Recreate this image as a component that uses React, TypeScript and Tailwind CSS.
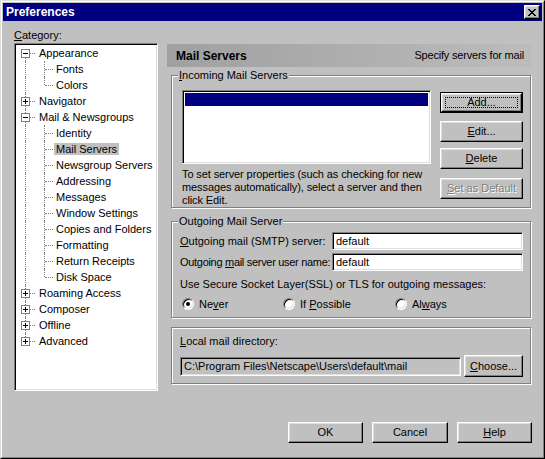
import React from 'react'

const raised =
  'bg-[#c0c0c0] border border-t-white border-l-white border-r-black border-b-black shadow-[inset_-1px_-1px_0_#808080,inset_1px_1px_0_#dfdfdf]'
const sunken =
  'border border-t-[#808080] border-l-[#808080] border-r-white border-b-white shadow-[inset_1px_1px_0_#000,inset_-1px_-1px_0_#dfdfdf]'
const etched = 'border border-[#808080] shadow-[inset_1px_1px_0_#fff,1px_1px_0_#fff]'

type Item = { label: string; level: 0 | 1; exp?: '+' | '-'; lastChild?: boolean; selected?: boolean }

const tree: Item[] = [
  { label: 'Appearance', level: 0, exp: '-' },
  { label: 'Fonts', level: 1 },
  { label: 'Colors', level: 1, lastChild: true },
  { label: 'Navigator', level: 0, exp: '+' },
  { label: 'Mail & Newsgroups', level: 0, exp: '-' },
  { label: 'Identity', level: 1 },
  { label: 'Mail Servers', level: 1, selected: true },
  { label: 'Newsgroup Servers', level: 1 },
  { label: 'Addressing', level: 1 },
  { label: 'Messages', level: 1 },
  { label: 'Window Settings', level: 1 },
  { label: 'Copies and Folders', level: 1 },
  { label: 'Formatting', level: 1 },
  { label: 'Return Receipts', level: 1 },
  { label: 'Disk Space', level: 1, lastChild: true },
  { label: 'Roaming Access', level: 0, exp: '+' },
  { label: 'Composer', level: 0, exp: '+' },
  { label: 'Offline', level: 0, exp: '+' },
  { label: 'Advanced', level: 0, exp: '+' },
]

function TreeRow({ item, first, last }: { item: Item; first: boolean; last: boolean }) {
  const rootLine = first ? 'top-[8px] bottom-0' : last ? 'top-0 h-[8px]' : 'inset-y-0'
  return (
    <div className={`relative h-[16px] leading-[16px] ${item.level === 0 ? 'pl-[21px]' : 'pl-[38px]'}`}>
      <span className={`absolute left-[9px] w-0 border-l border-dotted border-[#808080] ${rootLine}`} />
      {item.level === 0 ? (
        <>
          <span className="absolute left-[14px] top-[8px] w-[5px] border-t border-dotted border-[#808080]" />
          <span className="absolute left-[5px] top-[4px] w-[9px] h-[9px] border border-[#808080] bg-white">
            <span className="absolute left-[1px] top-[3px] w-[5px] h-px bg-black" />
            {item.exp === '+' && <span className="absolute left-[3px] top-[1px] w-px h-[5px] bg-black" />}
          </span>
        </>
      ) : (
        <>
          <span
            className={`absolute left-[28px] w-0 border-l border-dotted border-[#808080] ${
              item.lastChild ? 'top-0 h-[8px]' : 'inset-y-0'
            }`}
          />
          <span className="absolute left-[29px] top-[8px] w-[8px] border-t border-dotted border-[#808080]" />
        </>
      )}
      <span className={`px-[2px] ${item.selected ? 'bg-[#c0c0c0]' : ''}`}>{item.label}</span>
    </div>
  )
}

function Btn({ children, className = '' }: { children: React.ReactNode; className?: string }) {
  return (
    <div className={`${raised} h-[21px] flex items-center justify-center ${className}`}>{children}</div>
  )
}

function Radio({ checked }: { checked?: boolean }) {
  return (
    <span className="relative w-[12px] h-[12px] rounded-full bg-white border border-t-[#808080] border-l-[#808080] border-r-white border-b-white shadow-[inset_1px_1px_0_#000,inset_-1px_-1px_0_#dfdfdf] flex items-center justify-center">
      {checked && <span className="w-[4px] h-[4px] rounded-full bg-black" />}
    </span>
  )
}

export default function App() {
  return (
    <div className="w-[545px] h-[459px] bg-[#c0c0c0] border border-t-[#dfdfdf] border-l-[#dfdfdf] border-r-black border-b-black font-['Liberation_Sans',Arial,sans-serif] text-[11px] text-black select-none">
      <div className="h-full border border-t-white border-l-white border-r-[#808080] border-b-[#808080] p-[1px]">
        {/* Title bar */}
        <div className="h-[18px] bg-[#000080] flex items-center justify-between pl-[3px] pr-[2px]">
          <span className="text-white font-bold text-[12px]">Preferences</span>
          <div className={`${raised} w-[16px] h-[14px] flex items-center justify-center`}>
            <svg width="8" height="7" viewBox="0 0 8 7">
              <path
                fill="#000"
                d="M0 0h2v1H0zM6 0h2v1H6zM1 1h2v1H1zM5 1h2v1H5zM2 2h4v1H2zM3 3h2v1H3zM2 4h4v1H2zM1 5h2v1H1zM5 5h2v1H5zM0 6h2v1H0zM6 6h2v1H6z"
              />
            </svg>
          </div>
        </div>

        {/* Body */}
        <div className="flex pt-[6px] pl-[11px]">
          <div className="w-[144px]">
            <div className="h-[16px] leading-[16px]">
              <u>C</u>ategory:
            </div>
            <div className={`${sunken} bg-white h-[348px] pt-px pl-px`}>
              {tree.map((it, i) => (
                <TreeRow key={it.label} item={it} first={i === 0} last={i === tree.length - 1} />
              ))}
            </div>
          </div>

          <div className="ml-[9px] w-[364px] pt-[17px]">
            <div className="h-[23px] bg-gradient-to-r from-[#a0a0a0] to-[#bcbcbc] flex items-center justify-between pl-[9px] pr-[7px]">
              <span className="font-bold text-[12px]">Mail Servers</span>
              <span className="tracking-[-0.2px]">Specify servers for mail</span>
            </div>

            {/* Incoming */}
            <fieldset className={`${etched} mt-[2px] ml-[4px] w-[360px] pl-[10px] pr-[7px] pt-[8px] pb-0`}>
              <legend className="-ml-[4px] px-[1px] bg-[#c0c0c0] leading-[13px]">
                <u>I</u>ncoming Mail Servers
              </legend>
              <div className="flex">
                <div className="w-[249px]">
                  <div className={`${sunken} bg-white h-[74px] p-[2px]`}>
                    <div className="h-[13px] bg-[#000080]" />
                  </div>
                  <p className="mt-[4px] leading-[13px] tracking-[-0.1px] whitespace-nowrap">
                    To set server properties (such as checking for new
                    <br />
                    messages automatically), select a server and then
                    <br />
                    click Edit.
                  </p>
                </div>
                <div className="ml-[9px] w-[83px]">
                  <div className="mt-[2px] h-[21px] border border-black">
                    <div className={`${raised} h-full flex items-center justify-center p-[3px]`}>
                      <span className="w-full h-full border border-dotted border-black flex items-center justify-center">
                        Add...
                      </span>
                    </div>
                  </div>
                  <Btn className="mt-[8px]">
                    <span>
                      <u>E</u>dit...
                    </span>
                  </Btn>
                  <Btn className="mt-[6px]">
                    <span>
                      <u>D</u>elete
                    </span>
                  </Btn>
                  <Btn className="mt-[9px]">
                    <span className="text-[#808080] [text-shadow:1px_1px_0_#fff]">
                      <u>S</u>et as Default
                    </span>
                  </Btn>
                </div>
              </div>
            </fieldset>

            {/* Outgoing */}
            <fieldset className={`${etched} mt-[7px] ml-[4px] w-[360px] pl-[8px] pr-[7px] pt-[4px] pb-[6px]`}>
              <legend className="-ml-[2px] px-[1px] bg-[#c0c0c0] leading-[13px]">Outgoing Mail Server</legend>
              <div className="flex items-center h-[18px]">
                <span className="w-[152px] whitespace-nowrap">
                  <u>O</u>utgoing mail (SMTP) server:
                </span>
                <div className={`${sunken} bg-white w-[191px] h-full flex items-center pl-[3px]`}>default</div>
              </div>
              <div className="flex items-center h-[18px] mt-[3px]">
                <span className="w-[152px] whitespace-nowrap tracking-[-0.3px]">
                  Outgoing <u>m</u>ail server user name:
                </span>
                <div className={`${sunken} bg-white w-[191px] h-full flex items-center pl-[3px]`}>default</div>
              </div>
              <div className="mt-[7px] leading-[13px] whitespace-nowrap">
                Use Secure Socket Layer(SSL) or TLS for outgoing messages:
              </div>
              <div className="mt-[6px] ml-[2px] h-[14px] flex items-center">
                <div className="w-[101px] flex items-center gap-[5px]">
                  <Radio checked />
                  <span>
                    Ne<u>v</u>er
                  </span>
                </div>
                <div className="w-[112px] flex items-center gap-[5px]">
                  <Radio />
                  <span>
                    If <u>P</u>ossible
                  </span>
                </div>
                <div className="flex items-center gap-[5px]">
                  <Radio />
                  <span>
                    Al<u>w</u>ays
                  </span>
                </div>
              </div>
            </fieldset>

            {/* Local mail directory */}
            <div className={`${etched} mt-[9px] ml-[4px] w-[360px] pl-[8px] pr-[7px] pt-[7px] pb-[6px]`}>
              <div className="leading-[13px]">
                <u>L</u>ocal mail directory:
              </div>
              <div className="mt-[7px] flex items-center h-[22px]">
                <div className={`${sunken} w-[281px] h-[19px] flex items-center pl-[3px]`}>
                  C:\Program Files\Netscape\Users\default\mail
                </div>
                <Btn className="ml-[3px] w-[59px] h-[22px]">
                  <span>
                    <u>C</u>hoose...
                  </span>
                </Btn>
              </div>
            </div>
          </div>
        </div>

        {/* Dialog buttons */}
        <div className="mt-[31px] pr-[10px] flex justify-end gap-[9px]">
          <Btn className="w-[75px]">OK</Btn>
          <Btn className="w-[76px]">Cancel</Btn>
          <Btn className="w-[75px]">
            <span>
              <u>H</u>elp
            </span>
          </Btn>
        </div>
      </div>
    </div>
  )
}
